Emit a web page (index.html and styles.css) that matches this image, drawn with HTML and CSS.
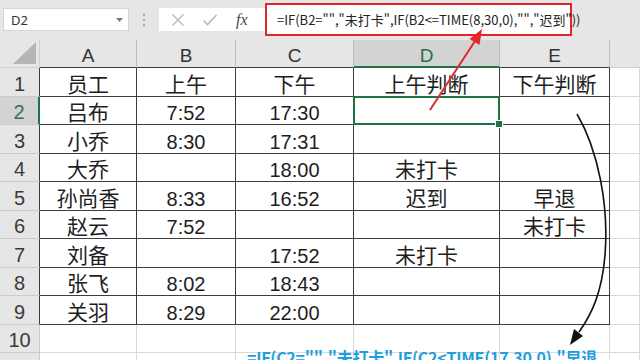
FILE: index.html
```html
<!DOCTYPE html>
<html lang="zh-CN">
<head>
<meta charset="utf-8">
<title>Excel 打卡判断</title>
<link rel="stylesheet" href="styles.css">
</head>
<body>
<div class="page">
  <div class="toolbar">
    <div class="namebox">
      <span>D2</span>
      <svg class="dd" width="7" height="4" viewBox="0 0 7 4"><path d="M0 0H7L3.5 4Z" fill="#7a7a7a"/></svg>
    </div>
    <div class="grip">
      <svg width="4" height="14" viewBox="0 0 4 14"><circle cx="2" cy="2" r="1.2" fill="#a8a8a8"/><circle cx="2" cy="7" r="1.2" fill="#a8a8a8"/><circle cx="2" cy="12" r="1.2" fill="#a8a8a8"/></svg>
    </div>
    <div class="fxbox">
      <svg class="ico" width="14" height="14" viewBox="0 0 14 14"><path d="M1.5 1.5L12.5 12.5M12.5 1.5L1.5 12.5" stroke="#b9b9b9" stroke-width="1.4" fill="none"/></svg>
      <svg class="ico" width="16" height="14" viewBox="0 0 16 14"><path d="M1.5 7.5L5.5 11.5L14.5 2" stroke="#b9b9b9" stroke-width="1.6" fill="none"/></svg>
      <span class="fx">fx</span>
    </div>
    <div class="formula">=IF(B2="","未打卡",IF(B2&lt;=TIME(8,30,0),"","迟到"))</div>
    <div class="rest"></div>
  </div>

  <div class="sheet">
    <div class="corner"><svg width="23" height="22" viewBox="0 0 23 22"><path d="M23 0V22H0Z" fill="#b5b5b5"/></svg></div>
    <div class="ch">A</div><div class="ch">B</div><div class="ch">C</div><div class="ch sel">D</div><div class="ch">E</div><div class="ch last"></div>

    <div class="rh">1</div>
    <div class="c cn">员工</div><div class="c cn">上午</div><div class="c cn">下午</div><div class="c cn">上午判断</div><div class="c cn">下午判断</div><div class="g"></div>

    <div class="rh sel">2</div>
    <div class="c cn">吕布</div><div class="c">7:52</div><div class="c">17:30</div><div class="c active"></div><div class="c"></div><div class="g"></div>

    <div class="rh">3</div>
    <div class="c cn">小乔</div><div class="c">8:30</div><div class="c">17:31</div><div class="c"></div><div class="c"></div><div class="g"></div>

    <div class="rh">4</div>
    <div class="c cn">大乔</div><div class="c"></div><div class="c">18:00</div><div class="c cn">未打卡</div><div class="c"></div><div class="g"></div>

    <div class="rh">5</div>
    <div class="c cn">孙尚香</div><div class="c">8:33</div><div class="c">16:52</div><div class="c cn">迟到</div><div class="c cn">早退</div><div class="g"></div>

    <div class="rh">6</div>
    <div class="c cn">赵云</div><div class="c">7:52</div><div class="c"></div><div class="c"></div><div class="c cn">未打卡</div><div class="g"></div>

    <div class="rh">7</div>
    <div class="c cn">刘备</div><div class="c"></div><div class="c">17:52</div><div class="c cn">未打卡</div><div class="c"></div><div class="g"></div>

    <div class="rh">8</div>
    <div class="c cn">张飞</div><div class="c">8:02</div><div class="c">18:43</div><div class="c"></div><div class="c"></div><div class="g"></div>

    <div class="rh">9</div>
    <div class="c cn">关羽</div><div class="c">8:29</div><div class="c">22:00</div><div class="c"></div><div class="c"></div><div class="g"></div>

    <div class="rh light">10</div>
    <div class="g"></div><div class="g"></div><div class="g"></div><div class="g"></div><div class="g"></div><div class="g"></div>

    <div class="rh light">11</div>
    <div class="g"></div><div class="g"></div><div class="g"></div><div class="g"></div><div class="g"></div><div class="g"></div>
  </div>

  <div class="note">=IF(C2="","未打卡",IF(C2&lt;TIME(17,30,0),"早退</div>

  <svg class="arrows" width="640" height="360" viewBox="0 0 640 360">
    <path d="M430 110L475 41" stroke="#e3282c" stroke-width="2" fill="none"/>
    <path d="M482 29L479.5 45L469.5 39Z" fill="#e3282c"/>
    <path d="M577 114C598 150 609 205 605 255C602 292 592 314 579 332" stroke="#111" stroke-width="1.6" fill="none"/>
    <path d="M570 345L583 336L574 329Z" fill="#111"/>
  </svg>
</div>
</body>
</html>
```
FILE: styles.css
```css
* { box-sizing: border-box; }
html, body { margin: 0; padding: 0; }
body { background: #fff; width: 640px; height: 360px; overflow: hidden; }
.page { position: relative; width: 640px; height: 360px; overflow: hidden; font-family: "Liberation Sans", "Noto Sans CJK SC", sans-serif; }

.toolbar {
  display: flex;
  align-items: center;
  height: 40px;
  padding: 3px 0 4px 3px;
  background: #e6e6e6;
}
.namebox {
  display: flex;
  align-items: center;
  justify-content: space-between;
  width: 126px;
  height: 23px;
  padding: 0 5px 0 7px;
  background: #fff;
  border: 1px solid #d6d6d6;
  font-size: 13px;
  color: #333;
  font-family: "Noto Sans", "Liberation Sans", sans-serif;
}
.grip { width: 30px; display: flex; justify-content: center; align-items: center; }
.fxbox {
  display: flex;
  align-items: center;
  width: 106px;
  height: 23px;
  background: #fff;
  padding-left: 12px;
  gap: 17px;
}
.fx { font-family: "Liberation Serif", serif; font-style: italic; font-size: 16px; color: #4a4a4a; margin-left: 1px; }
.formula {
  align-self: stretch;
  width: 307px;
  border: 2px solid #e0262a;
  background: #fff;
  display: flex;
  align-items: center;
  padding-left: 10px;
  font-family: "Noto Sans CJK SC", sans-serif;
  font-size: 13px;
  color: #222;
  white-space: nowrap;
}
.rest { flex: 1; }

.sheet {
  display: grid;
  grid-template-columns: 40px 97px 99px 118px 146px 110px 1fr;
  grid-template-rows: 28px repeat(10, 28.5px) 30px;
  height: 320px;
  overflow: hidden;
}
.corner {
  background: #e6e6e6;
  border-right: 1px solid #cfcfcf;
  border-bottom: 1px solid #cfcfcf;
  display: flex;
  align-items: flex-end;
  justify-content: flex-end;
  padding: 0 3px 3px 0;
}
.ch {
  background: #e6e6e6;
  border-right: 1px solid #bdbdbd;
  border-bottom: 1px solid #3d3d3d;
  display: flex;
  align-items: flex-end;
  justify-content: center;
  font-size: 19px;
  line-height: 19px;
  color: #333;
  padding-bottom: 2px;
}
.ch.sel { background: #d3d3d3; color: #217346; border-bottom: 2px solid #217346; padding-bottom: 1px; }
.ch.last { border-bottom-color: #cfcfcf; border-right: none; }
.rh {
  background: #e6e6e6;
  border-right: 1px solid #3d3d3d;
  border-bottom: 1px solid #cbcbcb;
  display: flex;
  align-items: flex-end;
  justify-content: center;
  font-size: 20px;
  line-height: 20px;
  color: #3a3a3a;
  padding-bottom: 2px;
}
.rh.sel { background: #d3d3d3; color: #3d6e50; border-right: 2px solid #217346; }
.rh.light { border-right-color: #cbcbcb; }
.c {
  border-right: 1px solid #3d3d3d;
  border-bottom: 1px solid #3d3d3d;
  display: flex;
  align-items: flex-end;
  justify-content: center;
  font-size: 20px;
  line-height: 20px;
  color: #1e1e1e;
  padding-bottom: 1px;
  white-space: nowrap;
}
.c.cn { font-size: 21px; line-height: 21px; font-family: "Noto Sans CJK SC", sans-serif; padding-bottom: 2px; }
.c.active { position: relative; }
.c.active::before {
  content: "";
  position: absolute;
  left: -1px; top: -1px; right: -1px; bottom: -1px;
  border: 2px solid #217346;
}
.c.active::after {
  content: "";
  position: absolute;
  right: -4px; bottom: -4px;
  width: 6px; height: 6px;
  background: #217346;
  border: 1px solid #fff;
}
.g {
  border-right: 1px solid #d9d9d9;
  border-bottom: 1px solid #d9d9d9;
}

.note {
  position: absolute;
  left: 247px;
  top: 349px;
  font-family: "Noto Sans CJK SC", sans-serif;
  font-weight: 700;
  font-size: 16px;
  line-height: 16px;
  letter-spacing: -0.25px;
  color: #1d9ee0;
  white-space: nowrap;
}
.arrows { position: absolute; left: 0; top: 0; pointer-events: none; }
```
